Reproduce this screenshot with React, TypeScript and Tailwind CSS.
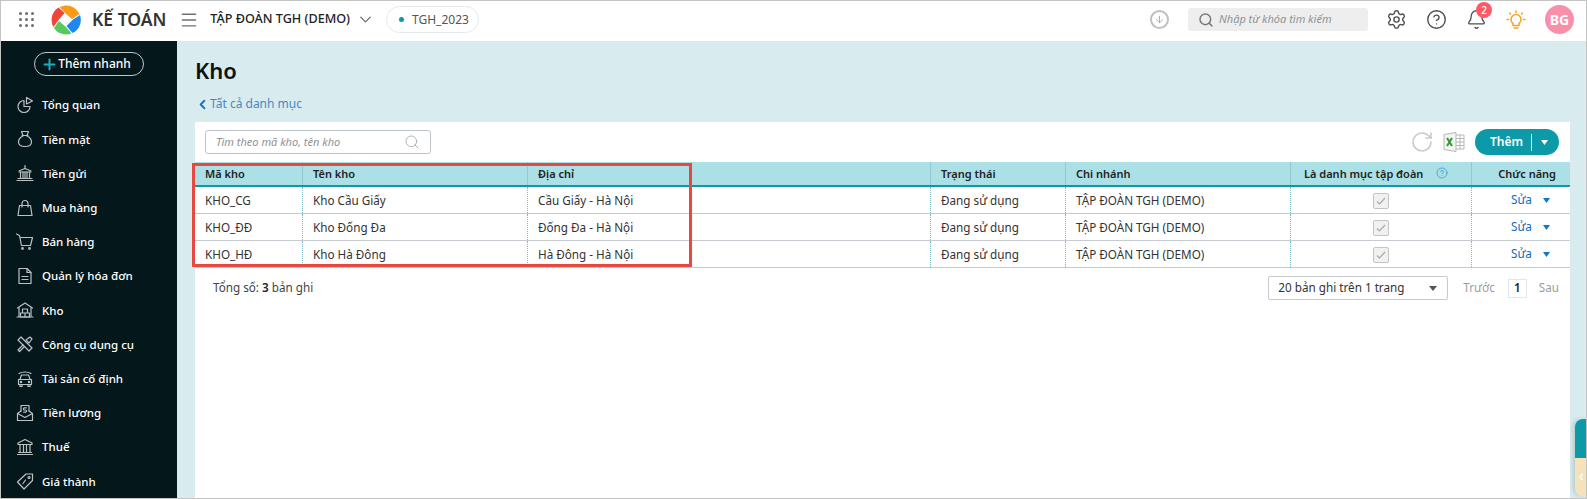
import React from "react";
import { Search, Settings, CircleHelp, Bell, ChevronDown, ChevronLeft, Plus, Menu, RotateCw, ArrowDown } from "lucide-react";

const font = { fontFamily: '"Noto Sans", sans-serif' };

function Ico({ children }: { children: React.ReactNode }) {
  return (
    <svg width="18" height="18" viewBox="0 0 18 18" fill="none" stroke="#bcc2c4" strokeWidth="1.2" strokeLinejoin="round" strokeLinecap="round">
      {children}
    </svg>
  );
}

const menu: { label: string; icon: React.ReactNode }[] = [
  { label: "Tổng quan", icon: <Ico><path d="M8 4.500a6 6 0 1 0 6 6H8z" /><path d="M10.500 1.500v6.500l6-3z" /></Ico> },
  { label: "Tiền mặt", icon: <Ico><path d="M5.500 1.500h7L11 5.500H7z" /><path d="M6 5.500h6" /><path d="M7 6c-3 1.500-4.500 3.500-4.500 6 0 3 3 4.500 6.500 4.500s6.500-1.500 6.500-4.500c0-2.500-1.500-4.500-4.500-6" /></Ico> },
  { label: "Tiền gửi", icon: <Ico><path d="M9 1.500v3" /><path d="M3 7l6-2.500L15 7" /><path d="M3 8h12" /><path d="M4.500 8v6M7 8v6M9 8v6M11 8v6M13.500 8v6" /><path d="M2 14.500h14M1 16.500h16" /></Ico> },
  { label: "Mua hàng", icon: <Ico><path d="M3.500 6.500h11l1.500 10H2z" /><path d="M6 8V4.500a3 3 0 0 1 6 0V8" /></Ico> },
  { label: "Bán hàng", icon: <Ico><path d="M.5 1l3 1.500 2 10h9l2-8H4" /><circle cx="6.500" cy="15.500" r=".8" /><circle cx="13.500" cy="15.500" r=".8" /></Ico> },
  { label: "Quản lý hóa đơn", icon: <Ico><path d="M3 1.500h8l4 4v11H3z" /><path d="M11 1.500v4h4" /><path d="M6 9.500h6M6 12.500h6" /></Ico> },
  { label: "Kho", icon: <Ico><path d="M1.500 7L9 2l7.500 5" /><path d="M3 6.500v9M15 6.500v9" /><path d="M1 16h16" /><path d="M6.500 8h5v4h-5zM4.500 12h4.500v4H4.500zM9 12h4.500v4H9z" /></Ico> },
  { label: "Công cụ dụng cụ", icon: <Ico><path d="M2 5l3-3 11 11-3 3z" /><path d="M14 2l2 2-3 4-3-3z" /><path d="M7 10l-5 5 1.500 1.500 5-5" /></Ico> },
  { label: "Tài sản cố định", icon: <Ico><path d="M3 3.500c3-2 9-2 12 0" /><path d="M4 9l1.500-4h7L14 9" /><path d="M2.500 9.500h13v5h-13z" /><path d="M4 14.500v2h2v-2M12 14.500v2h2v-2" /><circle cx="5" cy="12" r=".6" /><circle cx="13" cy="12" r=".6" /></Ico> },
  { label: "Tiền lương", icon: <Ico><path d="M5 7V1.500h8V7" /><path d="M1.500 9.500L5 7M16.500 9.500L13 7" /><path d="M1.500 9.500v7h15v-7L9 13.500z" /><path d="M10.300 3.800H8.500a1 1 0 0 0 0 2.200h1a1 1 0 0 1 0 2.200H7.700" /></Ico> },
  { label: "Thuế", icon: <Ico><path d="M9 1.500L16 5v1.500H2V5z" /><path d="M4 7v7M7.500 7v7M10.500 7v7M14 7v7" /><path d="M2.500 14.500h13M1.500 16.500h15" /></Ico> },
  { label: "Giá thành", icon: <Ico><path d="M1.500 10L10 2h6.500v6.500L8 17z" /><circle cx="13" cy="5.500" r="1" /><path d="M9.500 8L7 11.500" /></Ico> },
];

const rows = [
  ["KHO_CG", "Kho Cầu Giấy", "Cầu Giấy - Hà Nội"],
  ["KHO_ĐĐ", "Kho Đống Đa", "Đống Đa - Hà Nội"],
  ["KHO_HĐ", "Kho Hà Đông", "Hà Đông - Hà Nội"],
];

const cols = "grid grid-cols-[107px_225px_403px_135px_225px_181px_99px]";

function Caret({ color, w = 8 }: { color: string; w?: number }) {
  return (
    <svg width={w} height="5" viewBox="0 0 8 5" preserveAspectRatio="none"><path d="M0 0h8L4 5z" fill={color} /></svg>
  );
}

function Header() {
  return (
    <div className="h-[40px] shrink-0 bg-white flex items-center pb-[3px]">
      <svg className="ml-[18px]" width="15" height="15" viewBox="0 0 15 15" fill="#6b6f72">
        {[1.5, 7.5, 13.5].map((y) => [1.5, 7.5, 13.5].map((x) => <circle key={`${x}-${y}`} cx={x} cy={y} r="1.5" />))}
      </svg>
      <svg className="ml-[17px]" width="30" height="30" viewBox="0 0 30 30">
        <path d="M14 0.500 A14.500 14.500 0 0 1 28.500 9 L21 14 L14 8 L8.500 2 Z" fill="#fb9a17" />
        <path d="M29 10 A14.500 14.500 0 0 1 21.500 28 L15.500 21 L22 14.500 Z" fill="#1e88f0" />
        <path d="M20.500 28.500 A14.500 14.500 0 0 1 3 23 L8 16 L15 22 Z" fill="#58c95f" />
        <path d="M2.500 22 A14.500 14.500 0 0 1 7.500 2.500 L13.500 8 L7.500 15 Z" fill="#ef4638" />
        <path d="M15 10l4.500 4.500L15 19l-4.500-4.500z" fill="#fff" stroke="#ddd" strokeWidth=".5" />
      </svg>
      <span className="ml-[11px] text-[17.5px] font-semibold text-[#333] whitespace-nowrap">KẾ TOÁN</span>
      <Menu className="ml-[13px] text-[#6f7174]" size={20} strokeWidth={1.7} />
      <span className="ml-[11px] text-[12.6px] font-medium text-[#222] whitespace-nowrap">TẬP ĐOÀN TGH (DEMO)</span>
      <ChevronDown className="ml-[6px] text-[#666]" size={19} strokeWidth={1.5} />
      <div className="ml-[11px] w-[93px] h-[27px] rounded-full border border-[#e6e9eb] flex items-center pl-[12px] gap-[8px]">
        <span className="w-[5px] h-[5px] rounded-full bg-[#0c9aa9]" />
        <span className="text-[12px] text-[#555]">TGH_2023</span>
      </div>
      <div className="ml-auto flex items-center">
        <div className="w-[19px] h-[19px] rounded-full border-2 border-[#bdbfc0] flex items-center justify-center">
          <ArrowDown size={11} className="text-[#aaa]" strokeWidth={2} />
        </div>
        <div className="ml-[19px] w-[180px] h-[23px] rounded-[3px] bg-[#eeeeee] flex items-center pl-[10px] gap-[5px]">
          <Search size={16} className="text-[#77797c]" strokeWidth={2.2} />
          <span className="text-[11px] italic text-[#8f9295] whitespace-nowrap">Nhập từ khóa tìm kiếm</span>
        </div>
        <Settings className="ml-[18px] text-[#4d4f52]" size={21} strokeWidth={1.6} />
        <CircleHelp className="ml-[19px] text-[#4d4f52]" size={21} strokeWidth={1.6} />
        <div className="relative ml-[19px] w-[21px] h-[21px]">
          <Bell className="text-[#4d4f52]" size={21} strokeWidth={1.5} />
          <span className="absolute -top-[7px] left-[10px] w-[16px] h-[16px] rounded-full bg-[#fd5a66] text-white text-[10px] font-medium flex items-center justify-center">2</span>
        </div>
        <svg className="ml-[19px]" width="20" height="20" viewBox="0 0 20 20" fill="none" stroke="#fca326" strokeWidth="1.5" strokeLinecap="round">
          <path d="M7 13.500c-1-1-2-2-2-4a5 5 0 0 1 10 0c0 2-1 3-2 4v2H7z" />
          <path d="M8 18h4M10 1v1.500M3.500 3l1 1M16.500 3l-1 1M1 9.500h1.500M17.500 9.500H19" />
        </svg>
        <div className="ml-[19px] mr-[12px] w-[29px] h-[29px] rounded-full bg-[#f890ac] text-white text-[14px] font-bold flex items-center justify-center">BG</div>
      </div>
    </div>
  );
}

function Sidebar() {
  return (
    <div className="w-[176px] shrink-0 bg-[#04171b] overflow-hidden">
      <div className="flex justify-center pt-[11px] pb-[12px]">
        <div className="w-[110px] h-[24px] rounded-full border border-[#c3c7c8] flex items-center justify-center pr-[6px] text-white text-[12px] font-medium">
          <Plus size={17} strokeWidth={2.8} className="text-[#1bb0bf]" />
          Thêm nhanh
        </div>
      </div>
      {menu.map((m) => (
        <div key={m.label} className="h-[34.2px] flex items-center pl-[15px] gap-[8px] text-white text-[11.5px] font-medium whitespace-nowrap">
          {m.icon}
          {m.label}
        </div>
      ))}
    </div>
  );
}

function Table() {
  return (
    <div className="relative text-[11.7px] text-[#333]">
      <div className={`${cols} h-[25px] bg-[#abe1e6] border-b-2 border-[#0c9aa9] text-[11px] font-semibold text-[#222] items-center`}>
        {["Mã kho", "Tên kho", "Địa chỉ", "Trạng thái", "Chi nhánh"].map((h, i) => (
          <div key={h} className={`h-full flex items-center pt-[1px] ${i === 0 ? "pl-[10px]" : "pl-[10px] border-l border-[#93c9cf]"}`}>{h}</div>
        ))}
        <div className="h-full flex items-center pl-[13px] pt-[1px] border-l border-[#93c9cf] gap-[13px]">
          Là danh mục tập đoàn
          <CircleHelp size={12} className="text-[#2c8fd0] -mt-[2px]" strokeWidth={1.4} />
        </div>
        <div className="h-full flex items-center justify-end pr-[14px] pt-[1px] border-l border-[#93c9cf]">Chức năng</div>
      </div>
      {rows.map((r) => (
        <div key={r[0]} className={`${cols} h-[27px] border-b border-[#c5cbd0] items-center`}>
          <div className="h-full flex items-center pl-[10px] pt-[2px]">{r[0]}</div>
          <div className="h-full flex items-center pl-[10px] pt-[2px] border-l border-dotted border-[#7fb9c0]">{r[1]}</div>
          <div className="h-full flex items-center pl-[10px] pt-[2px] border-l border-dotted border-[#7fb9c0]">{r[2]}</div>
          <div className="h-full flex items-center pl-[10px] pt-[2px] border-l border-dotted border-[#7fb9c0]">Đang sử dụng</div>
          <div className="h-full flex items-center pl-[10px] pt-[2px] border-l border-dotted border-[#7fb9c0]">TẬP ĐOÀN TGH (DEMO)</div>
          <div className="h-full flex items-center justify-center pt-[2px] border-l border-dotted border-[#7fb9c0]">
            <div className="w-[16px] h-[16px] rounded-[2px] bg-[#f1f1f1] border border-[#c4c4c4] flex items-center justify-center">
              <svg width="12" height="12" viewBox="0 0 12 12" fill="none" stroke="#a9a9a9" strokeWidth="1.2"><path d="M2 6.500l2.500 2.500L10 3" /></svg>
            </div>
          </div>
          <div className="h-full flex items-center pl-[39px] gap-[11px] border-l border-dotted border-[#7fb9c0] text-[#0f6cbd]">
            Sửa
            <Caret color="#0f78c9" w={7} />
          </div>
        </div>
      ))}
      <div className="absolute -left-[3px] top-[1px] w-[500px] h-[104px] border-[3px] border-[#e8483f] pointer-events-none" />
    </div>
  );
}

export default function App() {
  return (
    <div className="relative h-[499px] w-[1587px] border border-[#c4c4c4] flex flex-col overflow-hidden bg-[#d8ecef]" style={font}>
      <Header />
      <div className="flex flex-1 min-h-0">
        <Sidebar />
        <div className="flex-1 min-w-0 pl-[18px] pr-[16px] flex flex-col">
          <h1 className="mt-[13px] h-[32px] leading-[32px] text-[22px] font-semibold text-[#111]">Kho</h1>
          <div className="mt-[8px] h-[20px] flex items-center text-[12px] text-[#4a87c0]">
            <ChevronLeft size={15} strokeWidth={3} className="text-[#1a73c0]" />
            Tất cả danh mục
          </div>
          <div className="mt-[8px] flex-1 bg-white">
            <div className="h-[40px] flex items-center pl-[10px] pr-[11px]">
              <div className="w-[226px] h-[24px] border border-[#bcc4cb] rounded-[3px] flex items-center pl-[10px] pr-[10px] justify-between">
                <span className="text-[11px] italic text-[#8f9295]">Tìm theo mã kho, tên kho</span>
                <Search size={16} className="text-[#a8adb2]" strokeWidth={1.4} />
              </div>
              <RotateCw size={24} className="ml-auto text-[#c5cbd0]" strokeWidth={1.6} />
              <svg className="ml-[9px]" width="22" height="20" viewBox="0 0 22 20" fill="none">
                <path d="M1 2.500L13 .5v19l-12-2z" fill="#f3f4f4" stroke="#b3b7ba" />
                <path d="M13 3h8v14h-8M13 6.500h8M13 10h8M13 13.500h8M17 3v14" stroke="#b3b7ba" />
                <path d="M4 6l5 8M9 6l-5 8" stroke="#2e9b2e" strokeWidth="2" />
              </svg>
              <div className="ml-[10px] w-[84px] h-[26px] rounded-full bg-[#0c9aa9] flex items-center text-white text-[12px] font-semibold">
                <span className="pl-[15px] pr-[8px]">Thêm</span>
                <span className="w-px h-[17px] bg-white" />
                <span className="ml-[9px]"><Caret color="#fff" w={7} /></span>
              </div>
            </div>
            <Table />
            <div className="h-[40px] flex items-center pl-[18px] pr-[11px] text-[11.7px] text-[#444]">
              <span>Tổng số: <b className="font-semibold text-[#222]">3</b> bản ghi</span>
              <div className="ml-auto w-[180px] h-[24px] border border-[#c5cbd0] rounded-[2px] flex items-center justify-between pl-[9px] pr-[10px] text-[#333]">
                20 bản ghi trên 1 trang
                <Caret color="#555" />
              </div>
              <span className="ml-[15px] text-[#9a9da0]">Trước</span>
              <span className="ml-[13px] w-[19px] h-[19px] border border-[#e4e6e8] flex items-center justify-center font-semibold text-[#222]">1</span>
              <span className="ml-[12px] text-[#9a9da0]">Sau</span>
            </div>
          </div>
        </div>
      </div>
      <div className="absolute right-0 bottom-[2px] w-[11px] h-[77px] rounded-l-[8px] overflow-hidden shadow-[-2px_0_4px_rgba(0,0,0,0.15)] flex flex-col">
        <div className="h-[39px] bg-[#0c9aa9]" />
        <div className="flex-1 bg-[#f5e2b8] flex items-center justify-center">
          <ChevronLeft size={10} strokeWidth={4} className="text-white" />
        </div>
      </div>
    </div>
  );
}
